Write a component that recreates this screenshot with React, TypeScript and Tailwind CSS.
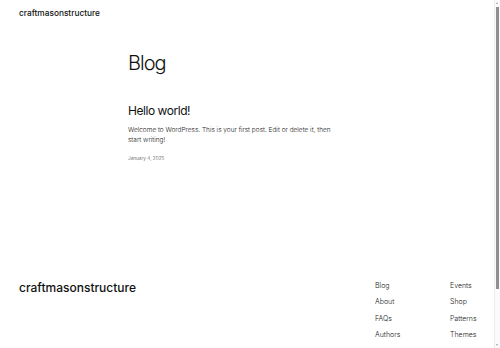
import React from "react";

export default function App() {
  return (
    <div
      className="relative h-[348px] w-[500px] overflow-hidden bg-white text-[#111]"
      style={{ fontFamily: "Inter, 'Noto Sans', sans-serif" }}
    >
      <div className="h-[416px]">
        <header className="px-[19px] pt-[8px]">
          <div className="text-[8.3px] leading-[10px] font-medium">craftmasonstructure</div>
        </header>

        <main className="mx-auto mt-[33px] w-[244px]">
          <h1 className="text-[20px] leading-[24px] font-light tracking-[-1px]">Blog</h1>
          <article className="mt-[29px]">
            <h2 className="text-[12px] leading-[14px] font-normal tracking-[-0.45px]">Hello world!</h2>
            <p className="mt-[7px] text-[6.5px] leading-[10px] text-[#222] font-light">
              <span className="whitespace-nowrap">Welcome to WordPress. This is your first post. Edit or delete it, then</span>
              <br />
              <span className="whitespace-nowrap">start writing!</span>
            </p>
            <div className="mt-[10px] text-[4.7px] leading-[7px] text-[#777]">January 4, 2025</div>
          </article>
        </main>

        <footer className="mt-[118px] flex px-[19px]">
          <div className="flex-1 pt-[1px] text-[12px] leading-[14px] font-medium">craftmasonstructure</div>
          <div className="mt-[1px] grid w-[106px] grid-cols-[75px_31px] gap-y-[6.4px] text-[7px] leading-[10px] text-[#222] font-light">
            <span>Blog</span>
            <span>Events</span>
            <span>About</span>
            <span>Shop</span>
            <span>FAQs</span>
            <span>Patterns</span>
            <span>Authors</span>
            <span>Themes</span>
          </div>
        </footer>
      </div>

      <div className="absolute right-0 top-0 h-[348px] w-[6px] border-l border-[#ececec] bg-[#fafafa]">
        <div className="absolute left-[1px] top-[7px] h-[282px] w-[3px] bg-[#8f8f8f]" />
        <div className="absolute left-[1px] top-[2px] h-0 w-0 border-x-[1.5px] border-b-[2px] border-x-transparent border-b-[#a0a0a0]" />
        <div className="absolute bottom-[2px] left-[1px] h-0 w-0 border-x-[1.5px] border-t-[2px] border-x-transparent border-t-[#a0a0a0]" />
      </div>
    </div>
  );
}
